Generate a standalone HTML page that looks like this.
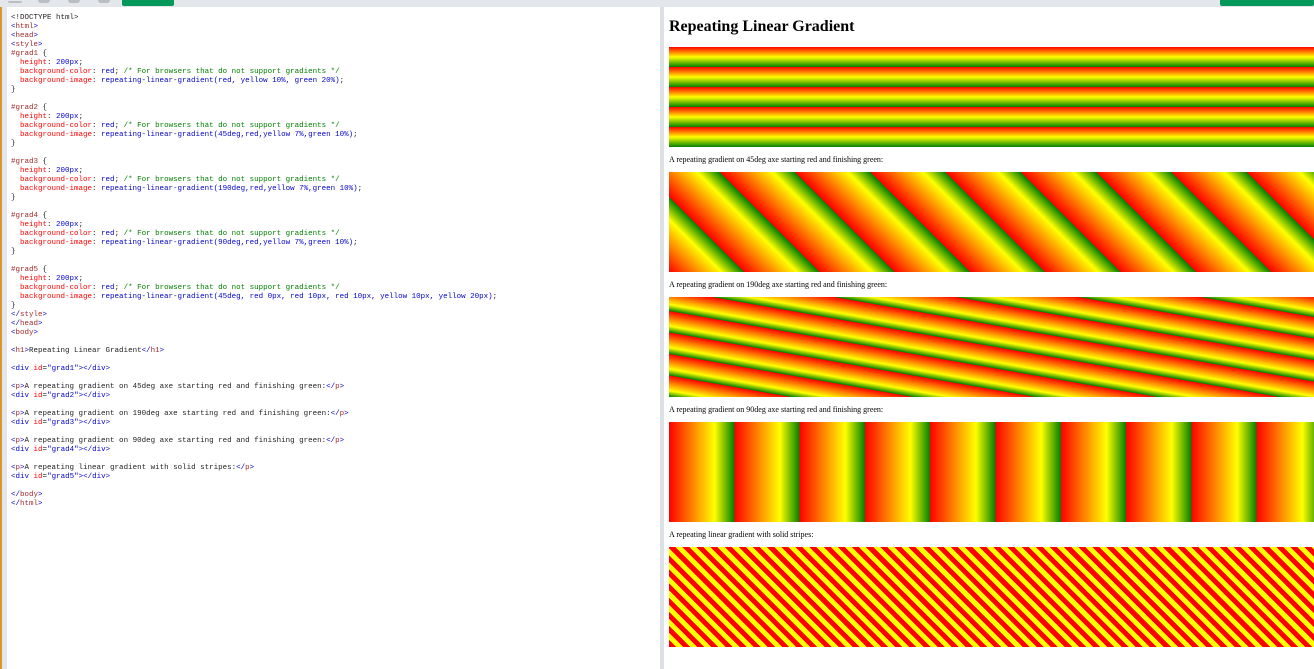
<!DOCTYPE html>
<html><head><style>
html,body{margin:0;padding:0;width:1314px;height:669px;overflow:hidden;background:#fff;}
#top{position:absolute;left:0;top:0;width:1314px;height:7px;background:#e3e6ea;}
.gbtn{position:absolute;top:0;height:6px;background:#04995a;border-radius:0 0 2px 2px;}
.ic{position:absolute;top:0;height:3px;background:#b9bec4;border-radius:0 0 3px 3px;}
#lstrip{position:absolute;left:0;top:7px;width:2px;height:662px;background:#d9962f;}
#lgray{position:absolute;left:2px;top:7px;width:5px;height:662px;background:#e3e6ea;}
#code{position:absolute;left:7px;top:7px;width:653px;height:662px;background:#fff;}
pre{margin:0;position:absolute;left:4px;top:7px;font-family:"Liberation Mono",monospace;font-size:7.5px;line-height:9px;color:#222;}
.t{color:#a52a2a}.b{color:#0000cd}.r{color:#ff0000}.g{color:#008000}
#div{position:absolute;left:660px;top:7px;width:4px;height:662px;background:#dde1e6;}
#res{position:absolute;left:665px;top:7px;width:649px;height:662px;overflow:hidden;}
#inner{zoom:0.5;width:1314px;margin:0;padding:0;font-family:"Liberation Serif",serif;font-size:16px;}
#inner .bd{margin:8px 0 8px 8px;}
h1{font-size:32px;margin:21.44px 0;line-height:37px;}
p{margin:16px 0;line-height:18px;}
.gd{height:200px;background-color:red;}
#grad1{background-image:repeating-linear-gradient(red,yellow 10%,green 20%);}
#grad2{background-image:repeating-linear-gradient(45deg,red,yellow 7%,green 10%);}
#grad3{background-image:repeating-linear-gradient(190deg,red,yellow 7%,green 10%);}
#grad4{background-image:repeating-linear-gradient(90deg,red,yellow 7%,green 10%);}
#grad5{background-image:repeating-linear-gradient(45deg,red 0px,red 10px,yellow 10px,yellow 20px);}
</style></head><body>
<div id="top"></div>
<div class="ic" style="left:8px;width:14px;height:2px;top:1px"></div>
<div class="ic" style="left:38px;width:12px"></div>
<div class="ic" style="left:68px;width:12px"></div>
<div class="ic" style="left:98px;width:12px"></div>
<div class="gbtn" style="left:122px;width:52px"></div>
<div class="gbtn" style="left:1220px;width:94px"></div>
<div id="lstrip"></div><div id="lgray"></div>
<div id="code"><pre>&lt;!DOCTYPE html&gt;
<span class="b">&lt;</span><span class="t">html</span><span class="b">&gt;</span>
<span class="b">&lt;</span><span class="t">head</span><span class="b">&gt;</span>
<span class="b">&lt;</span><span class="t">style</span><span class="b">&gt;</span>
<span class="t">#grad1</span> {
  <span class="r">height</span>: <span class="b">200px</span>;
  <span class="r">background-color</span>: <span class="b">red</span>; <span class="g">/* For browsers that do not support gradients */</span>
  <span class="r">background-image</span>: <span class="b">repeating-linear-gradient(red, yellow 10%, green 20%)</span>;
}

<span class="t">#grad2</span> {
  <span class="r">height</span>: <span class="b">200px</span>;
  <span class="r">background-color</span>: <span class="b">red</span>; <span class="g">/* For browsers that do not support gradients */</span>
  <span class="r">background-image</span>: <span class="b">repeating-linear-gradient(45deg,red,yellow 7%,green 10%)</span>;
}

<span class="t">#grad3</span> {
  <span class="r">height</span>: <span class="b">200px</span>;
  <span class="r">background-color</span>: <span class="b">red</span>; <span class="g">/* For browsers that do not support gradients */</span>
  <span class="r">background-image</span>: <span class="b">repeating-linear-gradient(190deg,red,yellow 7%,green 10%)</span>;
}

<span class="t">#grad4</span> {
  <span class="r">height</span>: <span class="b">200px</span>;
  <span class="r">background-color</span>: <span class="b">red</span>; <span class="g">/* For browsers that do not support gradients */</span>
  <span class="r">background-image</span>: <span class="b">repeating-linear-gradient(90deg,red,yellow 7%,green 10%)</span>;
}

<span class="t">#grad5</span> {
  <span class="r">height</span>: <span class="b">200px</span>;
  <span class="r">background-color</span>: <span class="b">red</span>; <span class="g">/* For browsers that do not support gradients */</span>
  <span class="r">background-image</span>: <span class="b">repeating-linear-gradient(45deg, red 0px, red 10px, red 10px, yellow 10px, yellow 20px)</span>;
}
<span class="b">&lt;/</span><span class="t">style</span><span class="b">&gt;</span>
<span class="b">&lt;/</span><span class="t">head</span><span class="b">&gt;</span>
<span class="b">&lt;</span><span class="t">body</span><span class="b">&gt;</span>

<span class="b">&lt;</span><span class="t">h1</span><span class="b">&gt;</span>Repeating Linear Gradient<span class="b">&lt;/</span><span class="t">h1</span><span class="b">&gt;</span>

<span class="b">&lt;div</span> <span class="r">id</span>=<span class="b">"grad1"&gt;&lt;/div&gt;</span>

<span class="b">&lt;</span><span class="t">p</span><span class="b">&gt;</span>A repeating gradient on 45deg axe starting red and finishing green:<span class="b">&lt;/</span><span class="t">p</span><span class="b">&gt;</span>
<span class="b">&lt;div</span> <span class="r">id</span>=<span class="b">"grad2"&gt;&lt;/div&gt;</span>

<span class="b">&lt;</span><span class="t">p</span><span class="b">&gt;</span>A repeating gradient on 190deg axe starting red and finishing green:<span class="b">&lt;/</span><span class="t">p</span><span class="b">&gt;</span>
<span class="b">&lt;div</span> <span class="r">id</span>=<span class="b">"grad3"&gt;&lt;/div&gt;</span>

<span class="b">&lt;</span><span class="t">p</span><span class="b">&gt;</span>A repeating gradient on 90deg axe starting red and finishing green:<span class="b">&lt;/</span><span class="t">p</span><span class="b">&gt;</span>
<span class="b">&lt;div</span> <span class="r">id</span>=<span class="b">"grad4"&gt;&lt;/div&gt;</span>

<span class="b">&lt;</span><span class="t">p</span><span class="b">&gt;</span>A repeating linear gradient with solid stripes:<span class="b">&lt;/</span><span class="t">p</span><span class="b">&gt;</span>
<span class="b">&lt;div</span> <span class="r">id</span>=<span class="b">"grad5"&gt;&lt;/div&gt;</span>

<span class="b">&lt;/</span><span class="t">body</span><span class="b">&gt;</span>
<span class="b">&lt;/</span><span class="t">html</span><span class="b">&gt;</span></pre></div>
<div id="div"></div>
<div id="res"><div id="inner"><div class="bd">
<h1>Repeating Linear Gradient</h1>
<div class="gd" id="grad1"></div>
<p>A repeating gradient on 45deg axe starting red and finishing green:</p>
<div class="gd" id="grad2"></div>
<p>A repeating gradient on 190deg axe starting red and finishing green:</p>
<div class="gd" id="grad3"></div>
<p>A repeating gradient on 90deg axe starting red and finishing green:</p>
<div class="gd" id="grad4"></div>
<p>A repeating linear gradient with solid stripes:</p>
<div class="gd" id="grad5"></div>
</div></div></div>
</body></html>
